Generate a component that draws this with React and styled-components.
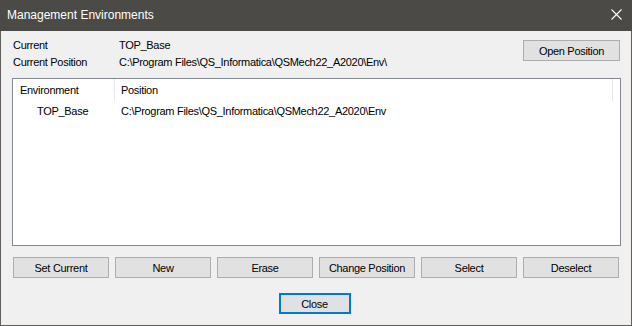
import styled, { createGlobalStyle } from "styled-components";

const GlobalStyle = createGlobalStyle`
  html, body {
    margin: 0;
    padding: 0;
    background: #f0f0f0;
  }
  * {
    box-sizing: border-box;
  }
`;

const Window = styled.div`
  width: 632px;
  height: 326px;
  display: flex;
  flex-direction: column;
  background: #f0f0f0;
  border: 1px solid #5f5e5c;
  border-top: none;
  font-family: "Liberation Sans", Arial, sans-serif;
  font-size: 11px;
  letter-spacing: -0.3px;
  color: #000;
`;

const TitleBar = styled.div`
  height: 31px;
  flex: none;
  display: flex;
  align-items: center;
  justify-content: space-between;
  background: #4b4a47;
  color: #fff;
  padding: 0 10px 2px 7px;
  margin: 0 -1px;
  font-size: 12px;
  letter-spacing: 0;
`;

const CloseIcon = styled.svg`
  width: 11px;
  height: 11px;
  display: block;
`;

const Body = styled.div`
  flex: 1;
  display: flex;
  flex-direction: column;
  padding: 6px 10px 0 11px;
`;

const Header = styled.div`
  display: flex;
  justify-content: space-between;
  align-items: flex-start;
`;

const Info = styled.div`
  display: flex;
  flex-direction: column;
  padding-left: 1px;
`;

const InfoRow = styled.div`
  display: flex;
  line-height: 17px;
`;

const Label = styled.span`
  width: 106px;
  flex: none;
`;

const Button = styled.button`
  height: 21px;
  width: ${(p) => p.$width || "auto"};
  padding: 0;
  margin: 0;
  background: #e1e1e1;
  border: 1px solid #adadad;
  font-family: inherit;
  font-size: 11px;
  letter-spacing: -0.3px;
  color: #000;
  cursor: default;
`;

const OpenButton = styled(Button)`
  margin: 3px 1px 0 0;
`;

const CloseButton = styled(Button)`
  border: 2px solid #0078d7;
`;

const List = styled.div`
  margin-top: 7px;
  height: 168px;
  background: #fff;
  border: 1px solid #828790;
  display: flex;
  flex-direction: column;
`;

const ListRow = styled.div`
  display: grid;
  grid-template-columns: 102px 1fr;
  height: ${(p) => (p.$head ? "22px" : "20px")};
  align-items: center;
`;

const Cell = styled.div`
  padding-left: ${(p) => p.$indent}px;
  height: 100%;
  display: flex;
  align-items: center;
  white-space: nowrap;
  overflow: hidden;
  border-right: ${(p) => (p.$sep ? "1px solid #e5e5e5" : "none")};
`;

const HeadCell = styled(Cell)`
  height: 22px;
`;

const HeadRest = styled.div`
  display: flex;
  height: 22px;
`;

const HeadFill = styled(Cell)`
  flex: 1;
`;

const HeadGap = styled.div`
  width: 7px;
`;

const ButtonRow = styled.div`
  margin-top: 11px;
  display: grid;
  grid-template-columns: repeat(6, 1fr);
  gap: 6px;
  padding: 0 2px 0 1px;
`;

const Footer = styled.div`
  margin-top: 15px;
  display: flex;
  justify-content: center;
  padding-right: 4px;
`;

const actions = ["Set Current", "New", "Erase", "Change Position", "Select", "Deselect"];
const path = "C:\\Program Files\\QS_Informatica\\QSMech22_A2020\\Env";

export default function App() {
  return (
    <>
      <GlobalStyle />
      <Window>
        <TitleBar>
          <span>Management Environments</span>
          <CloseIcon viewBox="0 0 11 11">
            <path d="M0.5 0.5 L10.5 10.5 M10.5 0.5 L0.5 10.5" stroke="#fff" strokeWidth="1.1" fill="none" />
          </CloseIcon>
        </TitleBar>
        <Body>
          <Header>
            <Info>
              <InfoRow>
                <Label>Current</Label>
                <span>TOP_Base</span>
              </InfoRow>
              <InfoRow>
                <Label>Current Position</Label>
                <span>{path}\</span>
              </InfoRow>
            </Info>
            <OpenButton $width="97px">Open Position</OpenButton>
          </Header>
          <List>
            <ListRow $head>
              <HeadCell $indent={7} $sep>Environment</HeadCell>
              <HeadRest>
                <HeadFill $indent={6} $sep>Position</HeadFill>
                <HeadGap />
              </HeadRest>
            </ListRow>
            <ListRow>
              <Cell $indent={24}>TOP_Base</Cell>
              <Cell $indent={6}>{path}</Cell>
            </ListRow>
          </List>
          <ButtonRow>
            {actions.map((a) => (
              <Button key={a}>{a}</Button>
            ))}
          </ButtonRow>
          <Footer>
            <CloseButton $width="72px">Close</CloseButton>
          </Footer>
        </Body>
      </Window>
    </>
  );
}
